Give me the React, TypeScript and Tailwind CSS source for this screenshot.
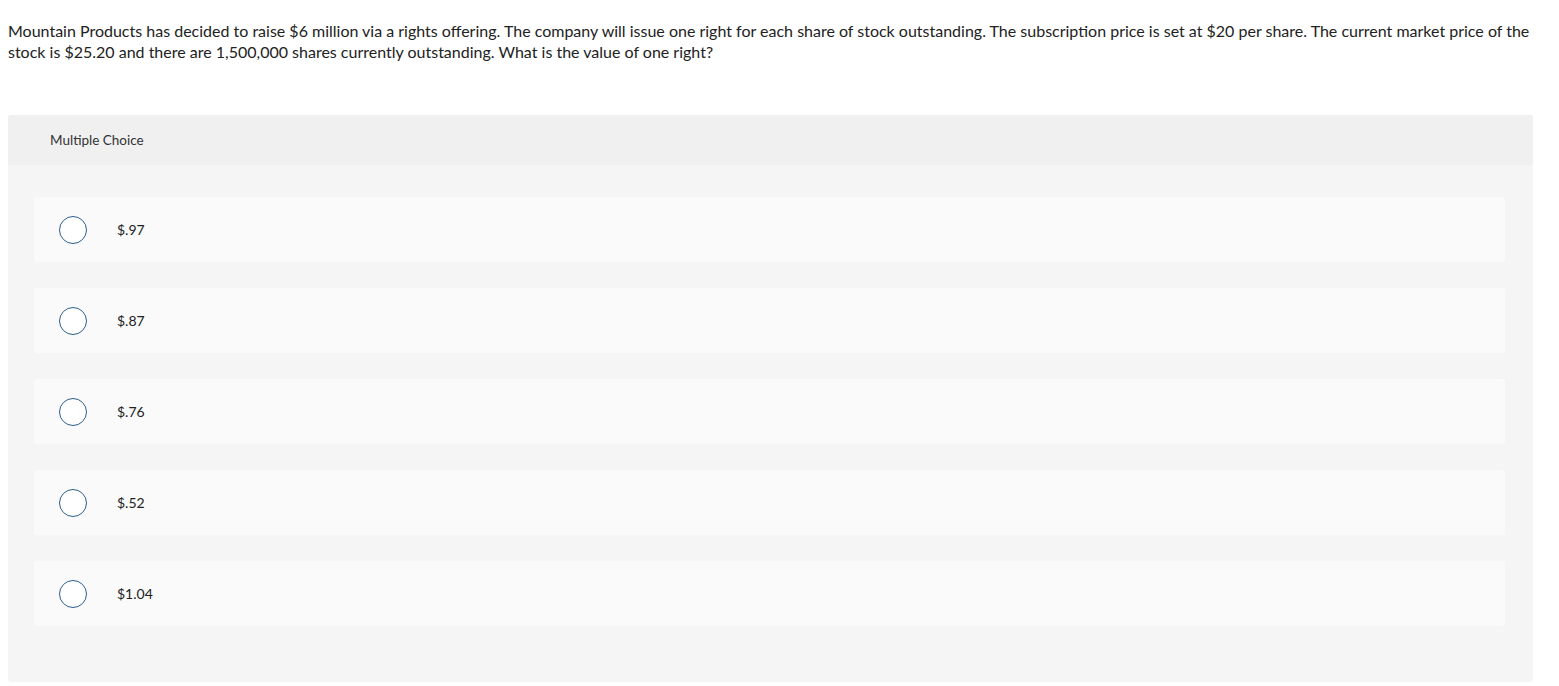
import React from "react";

const options = ["$.97", "$.87", "$.76", "$.52", "$1.04"];

export default function App() {
  return (
    <div className="min-h-[686px] bg-white text-[#1a1a1a]" style={{ fontFamily: "Lato, 'Open Sans', sans-serif" }}>
      <div className="px-[8px] pt-[20px]">
        <p className="text-[16px] leading-[21px] text-[#222]">
          Mountain Products has decided to raise $6 million via a rights offering. The company will issue one right for each share of stock outstanding. The subscription price is set at $20 per share. The current market price of the stock is $25.20 and there are 1,500,000 shares currently outstanding. What is the value of one right?
        </p>
        <div className="mt-[53px] mr-[18px] rounded-[3px] bg-[#f5f5f5]">
          <div className="flex h-[50px] items-center rounded-t-[3px] bg-[#f0f0f0] pl-[42px] text-[13.5px] text-[#333]">
            Multiple Choice
          </div>
          <div className="flex flex-col gap-[26px] pl-[26px] pr-[28px] pt-[32px] pb-[56px]">
            {options.map((o) => (
              <div key={o} className="flex h-[65px] items-center rounded-[3px] bg-[#fafafa] pl-[25px]">
                <span className="h-[28px] w-[28px] rounded-full border-[1.5px] border-[#2c5e8c] bg-white" />
                <span className="ml-[30px] text-[14px] text-[#222]">{o}</span>
              </div>
            ))}
          </div>
        </div>
      </div>
    </div>
  );
}
